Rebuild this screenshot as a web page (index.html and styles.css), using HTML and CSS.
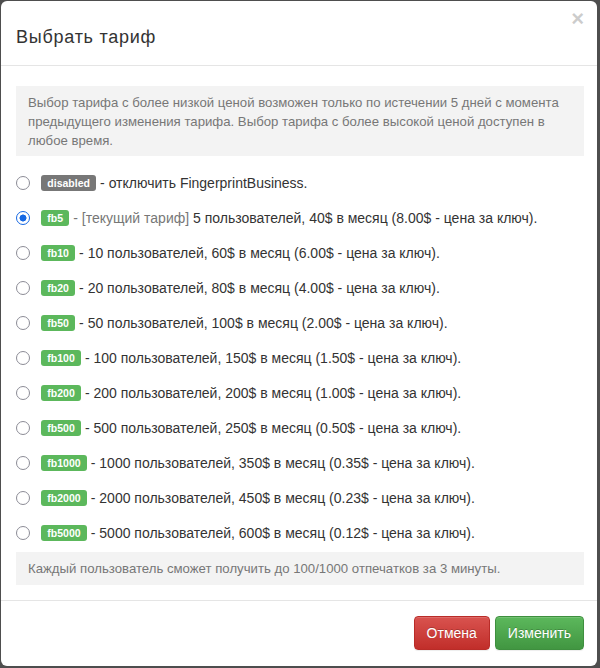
FILE: index.html
```html
<!DOCTYPE html>
<html lang="ru">
<head>
<meta charset="utf-8">
<title>Выбрать тариф</title>
<link rel="stylesheet" href="styles.css">
</head>
<body>
<div class="modal">
  <div class="modal-header">
    <h4 class="modal-title">Выбрать тариф</h4>
    <button class="close" type="button">×</button>
  </div>
  <div class="modal-body">
    <div class="well">Выбор тарифа с более низкой ценой возможен только по истечении 5 дней с момента предыдущего изменения тарифа. Выбор тарифа с более высокой ценой доступен в любое время.</div>
    <div class="options">
      <label class="option"><input type="radio" name="plan"><span class="text"><span class="tag tag-default">disabled</span> - отключить FingerprintBusiness.</span></label>
      <label class="option"><input type="radio" name="plan" checked><span class="text"><span class="tag tag-success">fb5</span> <span class="muted">- [текущий тариф]</span> 5 пользователей, 40$ в месяц (8.00$ - цена за ключ).</span></label>
      <label class="option"><input type="radio" name="plan"><span class="text"><span class="tag tag-success">fb10</span> - 10 пользователей, 60$ в месяц (6.00$ - цена за ключ).</span></label>
      <label class="option"><input type="radio" name="plan"><span class="text"><span class="tag tag-success">fb20</span> - 20 пользователей, 80$ в месяц (4.00$ - цена за ключ).</span></label>
      <label class="option"><input type="radio" name="plan"><span class="text"><span class="tag tag-success">fb50</span> - 50 пользователей, 100$ в месяц (2.00$ - цена за ключ).</span></label>
      <label class="option"><input type="radio" name="plan"><span class="text"><span class="tag tag-success">fb100</span> - 100 пользователей, 150$ в месяц (1.50$ - цена за ключ).</span></label>
      <label class="option"><input type="radio" name="plan"><span class="text"><span class="tag tag-success">fb200</span> - 200 пользователей, 200$ в месяц (1.00$ - цена за ключ).</span></label>
      <label class="option"><input type="radio" name="plan"><span class="text"><span class="tag tag-success">fb500</span> - 500 пользователей, 250$ в месяц (0.50$ - цена за ключ).</span></label>
      <label class="option"><input type="radio" name="plan"><span class="text"><span class="tag tag-success">fb1000</span> - 1000 пользователей, 350$ в месяц (0.35$ - цена за ключ).</span></label>
      <label class="option"><input type="radio" name="plan"><span class="text"><span class="tag tag-success">fb2000</span> - 2000 пользователей, 450$ в месяц (0.23$ - цена за ключ).</span></label>
      <label class="option"><input type="radio" name="plan"><span class="text"><span class="tag tag-success">fb5000</span> - 5000 пользователей, 600$ в месяц (0.12$ - цена за ключ).</span></label>
    </div>
    <div class="well well-note">Каждый пользователь сможет получить до 100/1000 отпечатков за 3 минуты.</div>
  </div>
  <div class="modal-footer">
    <button class="btn btn-danger" type="button">Отмена</button>
    <button class="btn btn-success" type="button">Изменить</button>
  </div>
</div>
</body>
</html>
```

FILE: styles.css
```css
html, body {
  margin: 0;
  padding: 0;
}

body {
  background: #4e4e4e;
  font-family: "Liberation Sans", Arial, Helvetica, sans-serif;
  font-size: 14px;
  line-height: 20px;
  color: #333;
}

.modal {
  margin: 1px 0 0 1px;
  width: 596px;
  height: 665px;
  background: #fff;
  border-radius: 6px;
  display: flex;
  flex-direction: column;
  overflow: hidden;
}

.modal-header {
  height: 65px;
  box-sizing: border-box;
  border-bottom: 1px solid #e5e5e5;
  padding: 0 13px 0 15px;
  display: flex;
  justify-content: space-between;
  align-items: flex-start;
}

.modal-title {
  margin: 23px 0 0;
  font-size: 18px;
  line-height: 26px;
  letter-spacing: 0.75px;
  font-weight: normal;
  color: #333;
}

.close {
  margin: 7px 0 0;
  padding: 0;
  border: 0;
  background: transparent;
  font-family: "Liberation Sans", Arial, sans-serif;
  font-size: 22px;
  font-weight: bold;
  line-height: 21px;
  color: #000;
  opacity: 0.2;
  cursor: pointer;
}

.modal-body {
  padding: 20px 13px 15px 15px;
}

.well {
  background: #f3f3f3;
  color: #777;
  font-size: 13.2px;
  line-height: 19px;
  padding: 7px 12px 6px;
}

.options {
  margin: 9px 0 2px;
  display: flex;
  flex-direction: column;
}

.option {
  height: 35px;
  display: flex;
  align-items: center;
  cursor: pointer;
}

.option input {
  appearance: none;
  -webkit-appearance: none;
  box-sizing: border-box;
  margin: 0 11px 0 0;
  width: 14px;
  height: 14px;
  border: 1.6px solid #8c8c96;
  border-radius: 50%;
  background: #fff;
  flex: none;
  cursor: pointer;
}

.option input:checked {
  border-color: #1668e3;
  background: radial-gradient(circle, #1668e3 0, #1668e3 3.2px, #fff 3.8px);
}

.tag {
  display: inline-block;
  font-size: 10.5px;
  font-weight: bold;
  line-height: 1;
  color: #fff;
  padding: 2.1px 6.3px 3.15px;
  border-radius: 3px;
  vertical-align: 1px;
}

.tag-default {
  background: #777;
}

.tag-success {
  background: #5cb85c;
}

.muted {
  color: #777;
}

.well-note {
  padding: 7px 12px;
}

.modal-footer {
  border-top: 1px solid #e5e5e5;
  padding: 15px 13px 15px 15px;
  display: flex;
  justify-content: flex-end;
  gap: 5px;
}

.btn {
  font-family: "Liberation Sans", Arial, sans-serif;
  font-size: 14px;
  line-height: 20px;
  padding: 6px 12px;
  border-radius: 4px;
  border: 1px solid transparent;
  color: #fff;
  text-shadow: 0 -1px 0 rgba(0, 0, 0, 0.2);
  box-shadow: inset 0 1px 0 rgba(255, 255, 255, 0.15), 0 1px 1px rgba(0, 0, 0, 0.075);
  cursor: pointer;
}

.btn-danger {
  background: linear-gradient(to bottom, #d9534f 0, #c12e2a 100%);
  border-color: #b92c28;
}

.btn-success {
  background: linear-gradient(to bottom, #5cb85c 0, #419641 100%);
  border-color: #3e8f3e;
}
```
